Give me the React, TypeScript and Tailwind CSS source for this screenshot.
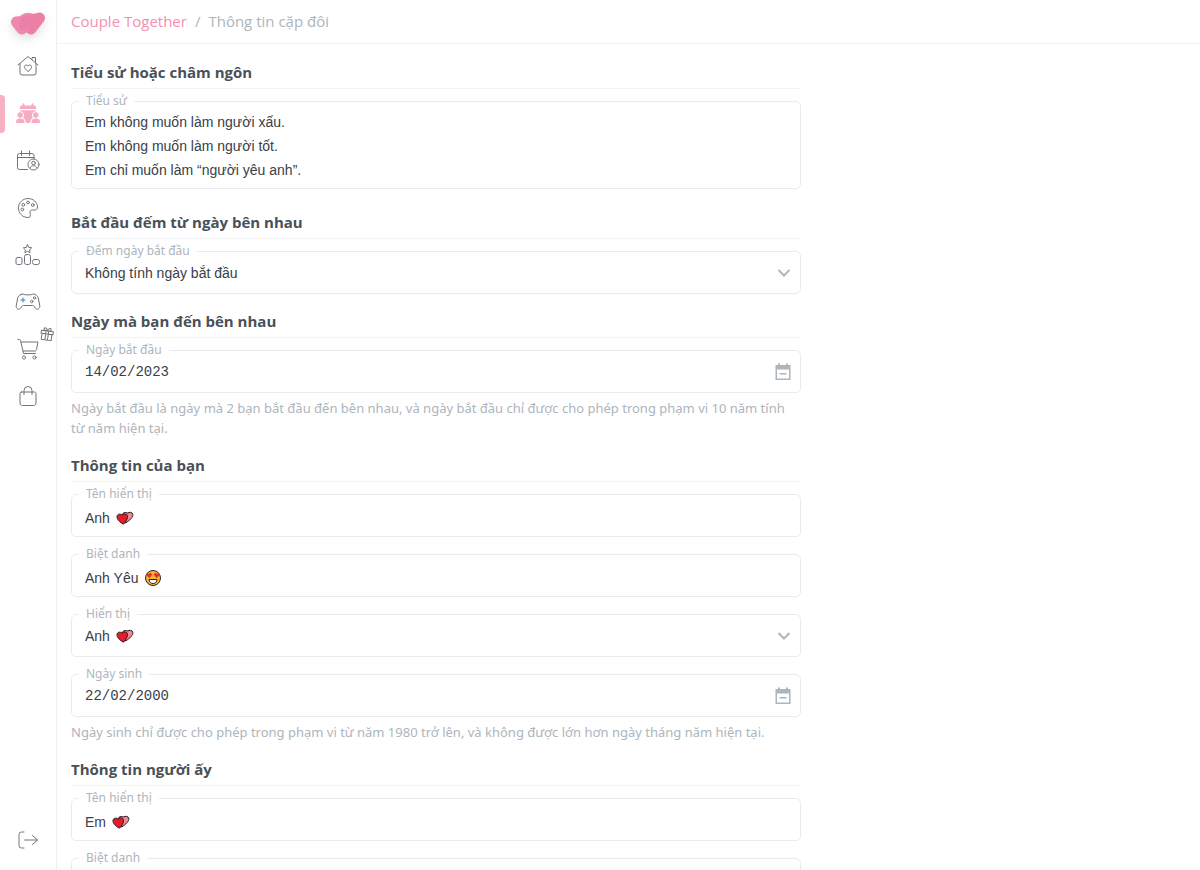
import { useId, useState } from "react";
import type { ReactNode } from "react";

const line = {
  fill: "none",
  stroke: "#6f747b",
  strokeWidth: 1,
  strokeLinecap: "round",
  strokeLinejoin: "round",
} as const;

function Logo() {
  return (
    <svg
      width="36"
      height="26"
      viewBox="0 0 36 26"
      strokeWidth="11"
      strokeLinecap="round"
      strokeLinejoin="round"
      className="drop-shadow-[0_4px_5px_rgba(0,0,0,0.12)]"
    >
      <path d="M18 7.500 21 18 29.500 7 24 8.500Z" fill="#ec7fa6" stroke="#ec7fa6" />
      <path d="M6.500 11 12 18 16.500 7.500 11.500 10.500Z" fill="#ef88ac" stroke="#ef88ac" />
      <path d="M14.500 9 13.500 15.500 18 8Z" fill="#eb80a6" stroke="#eb80a6" strokeWidth="8" />
    </svg>
  );
}

function HomeIcon() {
  return (
    <svg width="24" height="24" viewBox="0 1 24 24" {...line}>
      <path d="M2 11 12 2.500 22 11M4 9.500V19a2 2 0 0 0 2 2h12a2 2 0 0 0 2-2V9.500" />
      <path d="M16 5.500V3.500h3.500V8.500" />
      <path d="m12 17.500-3-3c-1-1.200-.8-3 .7-3.400 1-.3 1.900.2 2.300 1.100.4-.9 1.300-1.400 2.300-1.100 1.500.4 1.700 2.200.7 3.400Z" />
    </svg>
  );
}

function CoupleIcon() {
  return (
    <svg width="24" height="22" viewBox="0 0 24 22" fill="#f6adc2">
      <path d="M4 4a1.500 1.500 0 0 1 1.500-1.500h1V1.300a1 1 0 0 1 2 0v1.200h7V1.300a1 1 0 0 1 2 0v1.200h1A1.500 1.500 0 0 1 20 4v2H4Z" />
      <path d="M4 7.200h16v1a4 4 0 0 0-3 6.600c-1.500.8-2.300 2-2.500 3.500-.2 1-.8 1.700-1.500 1.700h-2c-.7 0-1.300-.7-1.500-1.700C9.300 16.800 8.500 15.600 7 14.800a4 4 0 0 0-3-6.600Z" />
      <circle cx="4.200" cy="12" r="2.700" />
      <circle cx="19.800" cy="12" r="2.700" />
      <path d="M0 20v-1c0-2.200 1.600-3.500 3.500-3.500H5c2 0 3.500 1.300 3.500 3.500v1ZM15.500 20v-1c0-2.200 1.600-3.500 3.500-3.500h1.500c2 0 3.500 1.300 3.500 3.500v1Z" />
    </svg>
  );
}

function CalendarUserIcon() {
  return (
    <svg width="24" height="24" viewBox="0 0 24 24" {...line}>
      <path d="M11.500 20.500h-8a2 2 0 0 1-2-2v-12a2 2 0 0 1 2-2h12.500a2 2 0 0 1 2 2V10M1.500 8.500H18M5.500 2v4.500M13.500 2v4.500" />
      <circle cx="17.500" cy="15.500" r="5.500" />
      <circle cx="17.500" cy="14" r="1.800" />
      <path d="M14 19c.6-1.500 1.900-2.300 3.500-2.300S20.400 17.500 21 19" />
    </svg>
  );
}

function PaletteIcon() {
  return (
    <svg width="22" height="22" viewBox="0 0 22 22" {...line}>
      <path d="M11 1.500c5.500 0 9.500 3.800 9.500 8.500 0 2.300-1.200 3-3 3h-2.300c-1.700 0-2.500 1.300-2.200 2.700l.4 2c.3 1.700-.6 2.800-2.400 2.800C5.500 20.500 1.500 16.200 1.500 11S5.500 1.500 11 1.500Z" />
      <circle cx="5.300" cy="12.500" r="1.400" />
      <circle cx="6.300" cy="7.800" r="1.400" />
      <circle cx="11" cy="5.500" r="1.400" />
      <circle cx="15.800" cy="8" r="1.400" />
    </svg>
  );
}

function RankIcon() {
  return (
    <svg width="26" height="22" viewBox="0 0 26 22" {...line}>
      <path d="m12.500 .8 1.300 2.600 2.900.4-2.100 2 .5 2.900-2.600-1.400-2.600 1.400.5-2.900-2.100-2 2.900-.4Z" />
      <rect x="9.500" y="10.500" width="6" height="10" rx="2" />
      <rect x="1" y="13.500" width="6" height="7" rx="1.500" />
      <rect x="17.500" y="15.500" width="7" height="5" rx="2" />
    </svg>
  );
}

function GamepadIcon() {
  return (
    <svg width="26" height="20" viewBox="0 0 26 20" {...line}>
      <path d="M6 2.500c1.500-.8 3-.5 4 .3h6c1-.8 2.500-1.100 4-.3 2.300.8 3 2 3.500 4.500l1.300 7c.4 2.500-2.700 4.200-4.300 2.300l-1.200-1.800c-.4-.7-1-1-1.800-1h-9c-.8 0-1.400.3-1.800 1l-1.200 1.800C3.900 18.200.8 16.500 1.200 14l1.300-7C3 4.500 3.700 3.300 6 2.500Z" />
      <path d="M8 6v4M6 8h4" stroke="#3d7fc4" />
      <circle cx="19.500" cy="6" r="1.200" />
      <circle cx="16.700" cy="9.500" r="1.200" />
    </svg>
  );
}

function CartIcon() {
  return (
    <svg width="24" height="24" viewBox="0 0 24 24" {...line}>
      <path d="M2 2.500h1.500c.6 0 .9.400 1 .9L7.500 16.500H19.500M5 5h17l-1.500 7.500c-.2 1-.7 1.500-1.700 1.500H7.200" />
      <circle cx="8" cy="20.500" r="1.600" />
      <circle cx="18.500" cy="20.500" r="1.600" />
    </svg>
  );
}

function GiftIcon() {
  return (
    <svg width="14" height="14" viewBox="0 0 14 14" {...line}>
      <path d="M1 4h12v3H1ZM2 7h10v6H2ZM5.700 4v9M8.300 4v9M7 4C4.500 4 3 3 3.500 1.800 4.300.3 6.500 1.300 7 4c.5-2.700 2.700-3.700 3.500-2.200C11 3 9.500 4 7 4Z" transform="rotate(8 7 7)" />
    </svg>
  );
}

function BagIcon() {
  return (
    <svg width="20" height="22" viewBox="0 0 20 22" {...line}>
      <path d="M3.500 7h13c1 0 1.500.6 1.500 1.500V18c0 1.700-1 2.500-2.500 2.500h-11C3 20.500 2 19.700 2 18V8.500C2 7.600 2.500 7 3.500 7ZM6 9.500V5.500a4 4 0 0 1 8 0v4" />
    </svg>
  );
}

function LogoutIcon() {
  return (
    <svg width="22" height="20" viewBox="0 0 22 20" {...line}>
      <path d="M7 2H4.500A2.500 2.500 0 0 0 2 4.500v11A2.500 2.500 0 0 0 4.500 18H7M7.500 10H20.500M15.500 5.500 20.500 10l-5 4.500" />
    </svg>
  );
}

function Hearts() {
  return (
    <svg width="18" height="16" viewBox="0 0 18 16" stroke="#26161a" strokeWidth="1" strokeLinejoin="round" className="pointer-events-none shrink-0">
      <path d="M9.500 13 6 7C5.500 4 7.500 2.300 9.500 2.500c1 0 1.700.2 2.300.6C13 1.800 16.300 2 16.800 4.300c.5 2.700-3 6.200-7.300 8.700Z" fill="#ef8a93" />
      <path d="M7.500 14.200C3 12 .8 9 1 6.500 1.200 3.800 4.800 3.500 6.200 5.200 7.500 3.200 11.300 3.500 11.500 6.200c.1 2.600-1.500 5.300-4 8Z" fill="#e81b2b" />
    </svg>
  );
}

function HeartEyes() {
  return (
    <svg width="18" height="18" viewBox="0 0 18 18" className="pointer-events-none shrink-0">
      <circle cx="9" cy="9" r="7.500" fill="#fbb62f" stroke="#2a2522" strokeWidth="1" />
      <path d="M5.500 9.200 2.500 6.300C1.600 4.800 3.600 3.300 5 4.700 6.400 3.300 8.300 4.300 7.900 6ZM12.500 9.200l3-2.900c.9-1.500-1.100-3-2.500-1.600-1.400-1.400-3.300-.4-2.900 1.300Z" fill="#ea2a33" />
      <path d="M5 10.500h8c0 2.500-1.800 4-4 4s-4-1.500-4-4Z" fill="#fff" stroke="#2a2522" strokeWidth="1" />
    </svg>
  );
}

function Chevron() {
  return (
    <svg width="14" height="10" viewBox="0 0 14 10" fill="none" stroke="#adb5bd" strokeWidth="2" className="pointer-events-none -mr-1 shrink-0">
      <path d="m1.500 2 5.500 5.500L12.500 2" />
    </svg>
  );
}

function CalendarIcon() {
  return (
    <svg width="16" height="18" viewBox="0 0 16 18" fill="#adb5bd">
      <path fillRule="evenodd" d="M3 .5h2V2h6V.5h2V2h2.500v15H.5V2H3ZM2 6.500v9h12v-9Z" />
      <path d="M4.500 10h7v1.500h-7Z" />
    </svg>
  );
}

const navItems = [
  { label: "Trang chủ", icon: <HomeIcon /> },
  { label: "Thông tin cặp đôi", icon: <CoupleIcon />, active: true },
  { label: "Sự kiện", icon: <CalendarUserIcon /> },
  { label: "Giao diện", icon: <PaletteIcon /> },
  { label: "Xếp hạng", icon: <RankIcon /> },
  { label: "Trò chơi", icon: <GamepadIcon /> },
  { label: "Cửa hàng", icon: <CartIcon />, gift: true },
  { label: "Túi đồ", icon: <BagIcon /> },
];

function Sidebar() {
  return (
    <aside className="flex w-[57px] shrink-0 flex-col items-center border-r border-[#eceef1]">
      <a href="#" aria-label="Couple Together" className="flex h-[43px] items-center pt-1">
        <Logo />
      </a>
      <nav className="flex w-full flex-col">
        {navItems.map((item) => (
          <a key={item.label} href="#" aria-label={item.label} className="relative flex h-[47px] items-center justify-center">
            {item.active && <span className="absolute left-0 h-[38px] w-[5px] rounded-r-sm bg-[#f8b0c4]" />}
            {item.icon}
            {item.gift && (
              <span className="absolute top-0.5 right-0.5">
                <GiftIcon />
              </span>
            )}
          </a>
        ))}
      </nav>
      <button type="button" aria-label="Đăng xuất" className="mt-auto mb-5">
        <LogoutIcon />
      </button>
    </aside>
  );
}

function Section({ title, children }: { title: string; children: ReactNode }) {
  return (
    <section>
      <h2 className="mb-[3px] border-b border-[#f1f3f5] pb-1 text-[15px] leading-6 font-bold text-[#495057]">{title}</h2>
      <div className="flex flex-col gap-2">{children}</div>
    </section>
  );
}

function Field({ id, label, children }: { id: string; label: string; children: ReactNode }) {
  return (
    <fieldset className="min-w-0 rounded-[5px] border border-[#e9ecef] px-[13px] font-['Liberation_Sans',Arial,sans-serif] text-sm text-[#3a4047]">
      <legend className="-ml-1.5 px-[7px] font-['Noto_Sans','Open_Sans',sans-serif] text-xs leading-[18px] text-[#adb5bd]">
        <label htmlFor={id}>{label}</label>
      </legend>
      {children}
    </fieldset>
  );
}

function TextField({ label, value, emoji }: { label: string; value: string; emoji: ReactNode }) {
  const id = useId();
  const [text, setText] = useState(value);
  return (
    <Field id={id} label={label}>
      <div className="flex h-[33px] items-center gap-1.5 pb-[3px]">
        <input id={id} type="text" value={text} onChange={(e) => setText(e.target.value)} className="field-sizing-content outline-none" />
        {emoji}
      </div>
    </Field>
  );
}

function SelectField({ label, option, emoji }: { label: string; option: string; emoji?: ReactNode }) {
  const id = useId();
  return (
    <Field id={id} label={label}>
      <div className="flex h-[33px] items-center justify-between pb-[7px]">
        <div className="flex items-center gap-1.5">
          <select id={id} className="field-sizing-content appearance-none outline-none">
            <option>{option}</option>
          </select>
          {emoji}
        </div>
        <Chevron />
      </div>
    </Field>
  );
}

function DateField({ label, value }: { label: string; value: string }) {
  const id = useId();
  const [date, setDate] = useState(value);
  return (
    <Field id={id} label={label}>
      <div className="flex h-[33px] items-center justify-between pb-[7px]">
        <input
          id={id}
          type="text"
          inputMode="numeric"
          value={date}
          onChange={(e) => setDate(e.target.value)}
          className="min-w-0 flex-1 font-['Liberation_Mono',monospace] text-sm outline-none"
        />
        <button type="button" aria-label="Chọn ngày" className="-mr-1">
          <CalendarIcon />
        </button>
      </div>
    </Field>
  );
}

function Hint({ children }: { children: ReactNode }) {
  return <p className="-mt-[3px] pr-2 font-['Noto_Sans','Open_Sans',sans-serif] text-[13px] leading-5 text-[#adb5bd]">{children}</p>;
}

export default function App() {
  const [bio, setBio] = useState(
    "Em không muốn làm người xấu.\nEm không muốn làm người tốt.\nEm chỉ muốn làm “người yêu anh”."
  );

  return (
    <div className="flex h-screen bg-white font-['Open_Sans',sans-serif]">
      <Sidebar />
      <div className="flex min-w-0 flex-1 flex-col">
        <header className="flex h-11 shrink-0 items-center border-b border-[#f1f3f5] px-3.5">
          <nav className="flex gap-2 text-[15px] text-[#adb5bd]">
            <a href="#" className="text-[#f48fb1]">Couple Together</a>
            <span>/</span>
            <span>Thông tin cặp đôi</span>
          </nav>
        </header>
        <main className="min-h-0 flex-1 overflow-y-auto px-3.5 py-4 [scrollbar-width:none]">
          <form className="flex max-w-[730px] flex-col gap-[15px]">
            <div className="pb-1.5">
              <Section title="Tiểu sử hoặc châm ngôn">
                <Field id="bio" label="Tiểu sử">
                  <textarea
                    id="bio"
                    rows={3}
                    value={bio}
                    onChange={(e) => setBio(e.target.value)}
                    className="mb-1.5 block w-full resize-none leading-6 outline-none"
                  />
                </Field>
              </Section>
            </div>
            <Section title="Bắt đầu đếm từ ngày bên nhau">
              <SelectField label="Đếm ngày bắt đầu" option="Không tính ngày bắt đầu" />
            </Section>
            <Section title="Ngày mà bạn đến bên nhau">
              <DateField label="Ngày bắt đầu" value="14/02/2023" />
              <Hint>
                Ngày bắt đầu là ngày mà 2 bạn bắt đầu đến bên nhau, và ngày bắt đầu chỉ được cho phép trong phạm vi 10 năm tính từ năm hiện tại.
              </Hint>
            </Section>
            <Section title="Thông tin của bạn">
              <TextField label="Tên hiển thị" value="Anh" emoji={<Hearts />} />
              <TextField label="Biệt danh" value="Anh Yêu" emoji={<HeartEyes />} />
              <SelectField label="Hiển thị" option="Anh" emoji={<Hearts />} />
              <DateField label="Ngày sinh" value="22/02/2000" />
              <Hint>Ngày sinh chỉ được cho phép trong phạm vi từ năm 1980 trở lên, và không được lớn hơn ngày tháng năm hiện tại.</Hint>
            </Section>
            <Section title="Thông tin người ấy">
              <TextField label="Tên hiển thị" value="Em" emoji={<Hearts />} />
              <TextField label="Biệt danh" value="Em Yêu" emoji={<HeartEyes />} />
            </Section>
          </form>
        </main>
      </div>
    </div>
  );
}
